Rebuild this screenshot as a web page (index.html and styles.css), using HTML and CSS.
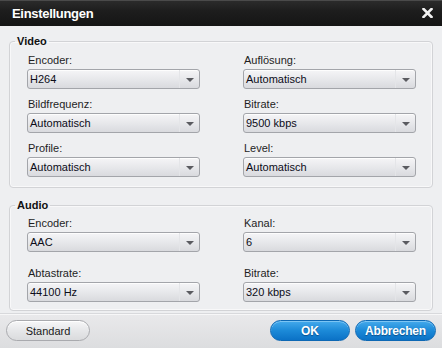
FILE: index.html
```html
<!DOCTYPE html>
<html lang="de">
<head>
    <meta charset="UTF-8">
    <meta name="viewport" content="width=device-width, initial-scale=1.0">
    <title>Einstellungen</title>
    <link rel="stylesheet" href="styles.css">
</head>
<body>
    <div class="dialog">
        <div class="titlebar">
            <span class="title">Einstellungen</span>
            <svg class="close" width="11" height="10" viewBox="0 0 11 10">
                <path d="M1.5 1 L9.5 9 M9.5 1 L1.5 9" stroke="#f2f2f2" stroke-width="2.6" stroke-linecap="square"/>
            </svg>
        </div>

        <div class="content">
            <fieldset class="group group-video">
                <legend>Video</legend>
                <div class="fields">
                    <div class="field">
                        <label>Encoder:</label>
                        <div class="select"><span>H264</span><i class="arrow"></i></div>
                    </div>
                    <div class="field">
                        <label>Auflösung:</label>
                        <div class="select"><span>Automatisch</span><i class="arrow"></i></div>
                    </div>
                    <div class="field">
                        <label>Bildfrequenz:</label>
                        <div class="select"><span>Automatisch</span><i class="arrow"></i></div>
                    </div>
                    <div class="field">
                        <label>Bitrate:</label>
                        <div class="select"><span>9500 kbps</span><i class="arrow"></i></div>
                    </div>
                    <div class="field">
                        <label>Profile:</label>
                        <div class="select"><span>Automatisch</span><i class="arrow"></i></div>
                    </div>
                    <div class="field">
                        <label>Level:</label>
                        <div class="select"><span>Automatisch</span><i class="arrow"></i></div>
                    </div>
                </div>
            </fieldset>

            <fieldset class="group group-audio">
                <legend>Audio</legend>
                <div class="fields">
                    <div class="field">
                        <label>Encoder:</label>
                        <div class="select"><span>AAC</span><i class="arrow"></i></div>
                    </div>
                    <div class="field">
                        <label>Kanal:</label>
                        <div class="select"><span>6</span><i class="arrow"></i></div>
                    </div>
                    <div class="field">
                        <label>Abtastrate:</label>
                        <div class="select"><span>44100 Hz</span><i class="arrow"></i></div>
                    </div>
                    <div class="field">
                        <label>Bitrate:</label>
                        <div class="select"><span>320 kbps</span><i class="arrow"></i></div>
                    </div>
                </div>
            </fieldset>
        </div>

        <div class="footer">
            <button type="button" class="btn btn-plain">Standard</button>
            <div class="footer-right">
                <button type="button" class="btn btn-blue btn-ok">OK</button>
                <button type="button" class="btn btn-blue btn-cancel">Abbrechen</button>
            </div>
        </div>
    </div>
</body>
</html>
```

FILE: styles.css
```css
html, body {
    margin: 0;
    padding: 0;
}
body {
    font-family: "Liberation Sans", Arial, sans-serif;
    font-size: 11px;
    color: #1c1c1c;
    background-color: #eeeff1;
}
.dialog {
    width: 442px;
    height: 348px;
    display: flex;
    flex-direction: column;
    background-color: #eeeff1;
}
.titlebar {
    height: 26px;
    box-sizing: border-box;
    display: flex;
    align-items: center;
    justify-content: space-between;
    padding: 0 9px 0 12px;
    background: linear-gradient(#2b2b2b, #1d1d1d 40%, #151515);
    border-top: 1px solid #4a4a4a;
}
.title {
    color: #fff;
    font-weight: bold;
    font-size: 13px;
    letter-spacing: -0.3px;
}
.close {
    display: block;
    margin-top: -1px;
}
.content {
    padding: 8px 9px 0 9px;
}
.group {
    margin: 0;
    border: 1px solid #d2d3d6;
    border-radius: 4px;
    box-shadow: inset 0 0 0 1px #f8f8f9;
    min-inline-size: 0;
}
.group legend {
    font-weight: bold;
    font-size: 11px;
    line-height: 14px;
    color: #111;
    padding: 0 2px;
    margin-left: -12px;
}
.group-video {
    padding: 5px 16px 10px 17px;
}
.group-audio {
    margin-top: 10px;
    padding: 4px 16px 8px 17px;
}
.fields {
    display: grid;
    grid-template-columns: 173px 173px;
    column-gap: 43px;
    row-gap: 8px;
}
.group-audio .fields {
    row-gap: 14px;
}
.field label {
    display: block;
    line-height: 14px;
    margin-bottom: 2px;
    padding-left: 1px;
    color: #1e1e1e;
}
.select {
    position: relative;
    height: 20px;
    box-sizing: border-box;
    border: 1px solid #a3a5aa;
    border-radius: 3px;
    background: linear-gradient(#f5f5f7, #e6e7ea 55%, #d9dade);
    box-shadow: inset 0 1px 0 #fdfdfd;
    display: flex;
    align-items: center;
    padding-left: 2px;
    color: #0c0c18;
}
.select span {
    flex: 1;
}
.arrow {
    width: 19px;
    height: 18px;
    display: flex;
    align-items: center;
    justify-content: center;
    border-left: 1px solid #e4e5e8;
}
.arrow::after {
    content: "";
    border-left: 4px solid transparent;
    border-right: 4px solid transparent;
    border-top: 4px solid #5a5b60;
    margin-top: 1px;
}
.footer {
    margin-top: auto;
    height: 35px;
    box-sizing: border-box;
    border-top: 1px solid #d8d9dc;
    box-shadow: inset 0 1px 0 #f7f7f8;
    background: linear-gradient(#e9e9eb, #dcdddf);
    display: flex;
    justify-content: space-between;
    padding: 6px 6px 0 6px;
}
.footer-right {
    display: flex;
    gap: 5px;
}
.btn {
    height: 21px;
    border-radius: 11px;
    font-family: "Liberation Sans", Arial, sans-serif;
    padding: 0;
    cursor: pointer;
}
.btn-plain {
    width: 84px;
    font-size: 11px;
    color: #1a1a1a;
    border: 1px solid #a9aaae;
    background: linear-gradient(#f7f7f8, #e6e7e9 50%, #dadbdd);
    box-shadow: inset 0 1px 0 #fff;
}
.btn-blue {
    font-size: 12px;
    font-weight: bold;
    color: #fff;
    border: 1px solid #0d68b4;
    background: linear-gradient(#45aaec, #1c8ad8 50%, #0b72c6);
    box-shadow: inset 0 1px 0 #7cc5f4;
    text-shadow: 0 1px 1px #0a4f8c;
}
.btn-ok {
    width: 80px;
}
.btn-cancel {
    width: 81px;
    letter-spacing: -0.2px;
}
```
